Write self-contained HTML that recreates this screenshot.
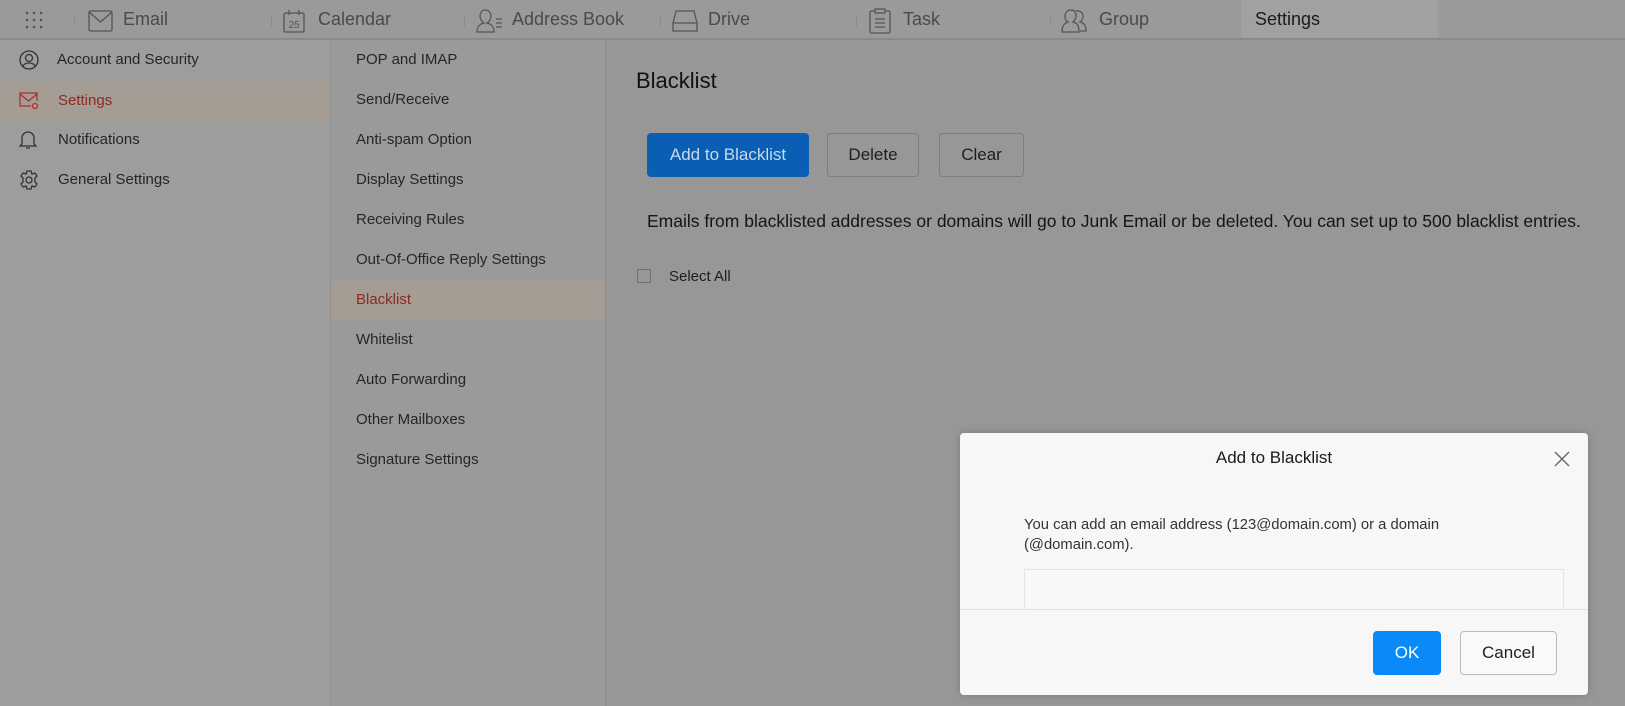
<!DOCTYPE html>
<html><head><meta charset="utf-8"><style>
*{margin:0;padding:0;box-sizing:border-box}
body{width:1625px;height:706px;overflow:hidden;background:#979797;font-family:"Liberation Sans",sans-serif;position:relative;color:#1e1e1e}
.hdr{position:absolute;left:0;top:0;width:1625px;height:40px;background:#9a9a9a;border-bottom:2px solid #8a8a8a}
.nav{position:absolute;top:0;height:38px;line-height:38px;font-size:18px;color:#4a4a4a}
.div{position:absolute;top:15px;width:1px;height:12px;background:#8c8c8c}
.stab{position:absolute;left:1241px;top:0;width:197px;height:38px;background:#a1a1a1}
.side{position:absolute;left:0;top:40px;width:331px;height:666px;background:#9d9d9d;border-right:1px solid #909090}
.mid{position:absolute;left:331px;top:40px;width:275px;height:666px;background:#9a9a9a;border-right:1px solid #8e8e8e}
.row{position:absolute;left:0;height:40px;line-height:40px;font-size:15px;color:#262626;width:100%}
.act{background:#a59d94;color:#8b2a22}
svg{position:absolute}
.btn{position:absolute;height:44px;line-height:42px;text-align:center;font-size:17px;border-radius:4px;border:1px solid #7d7d7d;color:#1e1e1e}
.modal{position:absolute;left:960px;top:433px;width:628px;height:262px;background:#f7f7f7;border-radius:4px;box-shadow:0 0 8px rgba(0,0,0,.2)}
</style></head><body>
<div class="hdr"></div>
<div class="stab"></div>
<svg style="left:24px;top:10px" width="20" height="20"><g fill="#555"><circle cx="3" cy="3" r="1.3"/><circle cx="10" cy="3" r="1.3"/><circle cx="17" cy="3" r="1.3"/><circle cx="3" cy="10" r="1.3"/><circle cx="10" cy="10" r="1.3"/><circle cx="17" cy="10" r="1.3"/><circle cx="3" cy="17" r="1.3"/><circle cx="10" cy="17" r="1.3"/><circle cx="17" cy="17" r="1.3"/></g></svg>
<div class="div" style="left:74px"></div><div class="div" style="left:271px"></div><div class="div" style="left:464px"></div><div class="div" style="left:660px"></div><div class="div" style="left:856px"></div><div class="div" style="left:1050px"></div>
<svg style="left:88px;top:10px" width="25" height="22"><rect x="1" y="1" width="23" height="20" rx="1.5" fill="none" stroke="#555" stroke-width="1.3"/><path d="M1 2 L12.5 12 L24 2" fill="none" stroke="#555" stroke-width="1.3"/></svg>
<div class="nav" style="left:123px">Email</div>
<svg style="left:283px;top:9px" width="22" height="24"><rect x="1" y="4" width="20" height="19" rx="1.5" fill="none" stroke="#555" stroke-width="1.3"/><path d="M6 1v5M16 1v5" stroke="#555" stroke-width="1.3"/><text x="11" y="19" font-size="10" text-anchor="middle" fill="#555" font-family="Liberation Sans">25</text></svg>
<div class="nav" style="left:318px">Calendar</div>
<svg style="left:476px;top:8px" width="30" height="26"><path d="M9 2c4 0 6 3 6 6s-2 6-4 7c4 1 7 3 7 9H1c0-6 3-8 7-9-2-1-4-4-4-7s2-6 5-6z" fill="none" stroke="#555" stroke-width="1.3"/><path d="M20 11h6M20 15h6M20 19h6" stroke="#555" stroke-width="1.3"/></svg>
<div class="nav" style="left:512px">Address Book</div>
<svg style="left:672px;top:10px" width="26" height="22"><path d="M4 1h18l3 12v8H1v-8z" fill="none" stroke="#555" stroke-width="1.3"/><path d="M1 13h24" stroke="#555" stroke-width="1.3"/></svg>
<div class="nav" style="left:708px">Drive</div>
<svg style="left:869px;top:8px" width="22" height="26"><rect x="1" y="3" width="20" height="22" rx="1.5" fill="none" stroke="#555" stroke-width="1.3"/><rect x="6" y="1" width="10" height="4" fill="#9a9a9a" stroke="#555" stroke-width="1.3"/><path d="M6 11h10M6 15h10M6 19h10" stroke="#555" stroke-width="1.3"/></svg>
<div class="nav" style="left:903px">Task</div>
<svg style="left:1061px;top:8px" width="30" height="26"><path d="M10 2c4 0 5 3 5 6s-2 5-3 6c4 1 6 3 6 10H1c0-7 3-9 6-10-2-1-3-3-3-6s2-6 6-6z" fill="none" stroke="#555" stroke-width="1.3"/><path d="M15 3c4-1 7 2 7 5s-1 5-3 6c4 1 6 3 6 9h-6" fill="none" stroke="#555" stroke-width="1.3"/></svg>
<div class="nav" style="left:1099px">Group</div>
<div class="nav" style="left:1255px;color:#1a1a1a">Settings</div>

<div class="side">
<div class="row" style="top:0"><svg style="left:19px;top:10px" width="20" height="20"><circle cx="10" cy="10" r="9" fill="none" stroke="#333" stroke-width="1.3"/><circle cx="10" cy="8" r="3.5" fill="none" stroke="#333" stroke-width="1.3"/><path d="M4 16c2-4 10-4 12 0" fill="none" stroke="#333" stroke-width="1.3"/></svg><span style="position:absolute;left:57px">Account and Security</span></div>
<div class="row act" style="top:41px"><svg style="left:19px;top:11px" width="20" height="18"><path d="M12 14H1V1h17v8" fill="none" stroke="#a9302a" stroke-width="1.3"/><path d="M1 2l8.5 7L18 2" fill="none" stroke="#a9302a" stroke-width="1.3"/><circle cx="16" cy="14" r="2.5" fill="none" stroke="#a9302a" stroke-width="1.3"/></svg><span style="position:absolute;left:58px">Settings</span></div>
<div class="row" style="top:80px"><svg style="left:19px;top:10px" width="18" height="20"><path d="M3 14V8a6 6 0 0 1 12 0v6l2 2H1z" fill="none" stroke="#333" stroke-width="1.3"/><path d="M7 18h4" stroke="#333" stroke-width="1.3"/></svg><span style="position:absolute;left:58px">Notifications</span></div>
<div class="row" style="top:120px"><svg style="left:19px;top:10px" width="20" height="20"><circle cx="10" cy="10" r="3" fill="none" stroke="#333" stroke-width="1.3"/><path d="M8 1h4l1 3 3-1 2 3-2 2 0 4 2 2-2 3-3-1-1 3H8l-1-3-3 1-2-3 2-2V8L2 6l2-3 3 1z" fill="none" stroke="#333" stroke-width="1.3"/></svg><span style="position:absolute;left:58px">General Settings</span></div>
</div>

<div class="mid">
<div class="row" style="top:0;padding-left:25px">POP and IMAP</div>
<div class="row" style="top:40px;padding-left:25px">Send/Receive</div>
<div class="row" style="top:80px;padding-left:25px">Anti-spam Option</div>
<div class="row" style="top:120px;padding-left:25px">Display Settings</div>
<div class="row" style="top:160px;padding-left:25px">Receiving Rules</div>
<div class="row" style="top:200px;padding-left:25px">Out-Of-Office Reply Settings</div>
<div class="row act" style="top:240px;padding-left:25px">Blacklist</div>
<div class="row" style="top:280px;padding-left:25px">Whitelist</div>
<div class="row" style="top:320px;padding-left:25px">Auto Forwarding</div>
<div class="row" style="top:360px;padding-left:25px">Other Mailboxes</div>
<div class="row" style="top:400px;padding-left:25px">Signature Settings</div>
</div>

<div style="position:absolute;left:636px;top:68px;font-size:22px;color:#111">Blacklist</div>
<div class="btn" style="left:647px;top:133px;width:162px;background:#0a5fb4;border-color:#0a5fb4;color:#c8d8ea">Add to Blacklist</div>
<div class="btn" style="left:827px;top:133px;width:92px">Delete</div>
<div class="btn" style="left:939px;top:133px;width:85px">Clear</div>
<div style="position:absolute;left:647px;top:211px;font-size:17.5px;color:#151515;white-space:nowrap">Emails from blacklisted addresses or domains will go to Junk Email or be deleted. You can set up to 500 blacklist entries.</div>
<div style="position:absolute;left:637px;top:269px;width:14px;height:14px;border:1px solid #6f6f6f"></div>
<div style="position:absolute;left:669px;top:268px;font-size:15px;color:#1e1e1e">Select All</div>

<div class="modal">
<div style="position:absolute;left:0;width:100%;top:15px;text-align:center;font-size:17px;color:#1a1a1a">Add to Blacklist</div>
<svg style="left:594px;top:18px" width="16" height="16"><path d="M1 1l14 14M15 1L1 15" stroke="#666" stroke-width="1.4"/></svg>
<div style="position:absolute;left:64px;top:82px;width:450px;font-size:14.8px;line-height:20px;color:#333">You can add an email address (123@domain.com) or a domain (@domain.com).</div>
<div style="position:absolute;left:64px;top:136px;width:540px;height:40px;border:1px solid #e4e4e4;border-bottom:none;background:#f8f8f8"></div>
<div style="position:absolute;left:0;top:176px;width:100%;height:1px;background:#e2e2e2"></div>
<div class="btn" style="left:413px;top:198px;width:68px;background:#0a8af8;border-color:#0a8af8;color:#fff">OK</div>
<div class="btn" style="left:500px;top:198px;width:97px;border-color:#bbb;color:#222;background:#f9f9f9">Cancel</div>
</div>
</body></html>
